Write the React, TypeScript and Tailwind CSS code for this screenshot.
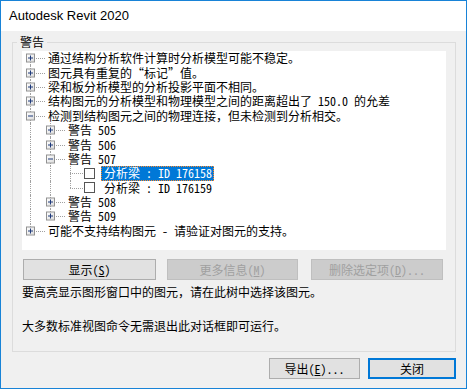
import React from "react";

const CJK = "font-['Noto_Sans_Mono_CJK_SC','Noto_Sans_CJK_SC',sans-serif]";

type Item = {
  label: React.ReactNode;
  expander?: "plus" | "minus";
  check?: boolean;
  selected?: boolean;
  children?: Item[];
};

const TREE: Item[] = [
  { label: "通过结构分析软件计算时分析模型可能不稳定。", expander: "plus" },
  { label: "图元具有重复的“标记”值。", expander: "plus" },
  { label: "梁和板分析模型的分析投影平面不相同。", expander: "plus" },
  { label: "结构图元的分析模型和物理模型之间的距离超出了 150.0 的允差", expander: "plus" },
  {
    label: "检测到结构图元之间的物理连接，但未检测到分析相交。",
    expander: "minus",
    children: [
      { label: "警告 505", expander: "plus" },
      { label: "警告 506", expander: "plus" },
      {
        label: "警告 507",
        expander: "minus",
        children: [
          { label: "分析梁 : ID 176158", check: true, selected: true },
          { label: "分析梁 : ID 176159", check: true },
        ],
      },
      { label: "警告 508", expander: "plus" },
      { label: "警告 509", expander: "plus" },
    ],
  },
  { label: "可能不支持结构图元 - 请验证对图元的支持。", expander: "plus" },
];

function Expander({ kind }: { kind: "plus" | "minus" }) {
  return (
    <span className="absolute left-[4px] top-1/2 -translate-y-1/2 w-[9px] h-[9px] border border-[#919191] bg-gradient-to-br from-white to-[#dcdcdc] flex items-center justify-center">
      <svg width="7" height="7" viewBox="0 0 7 7" aria-hidden>
        <path d="M1 3.5h5" stroke="#1f3a7a" strokeWidth="1" />
        {kind === "plus" && <path d="M3.5 1v5" stroke="#1f3a7a" strokeWidth="1" />}
      </svg>
    </span>
  );
}

function GuideCell({ pass }: { pass: boolean }) {
  return (
    <div className="relative w-[20px] h-full shrink-0">
      {pass && <span className="absolute left-[8px] top-0 h-full border-l border-dotted border-[#a0a0a0]" />}
    </div>
  );
}

function TreeRow({
  item,
  guides,
  top,
  bottom,
}: {
  item: Item;
  guides: boolean[];
  top: boolean;
  bottom: boolean;
}) {
  const leaf = item.check;
  return (
    <div className="flex h-[14.4px] items-stretch">
      {guides.map((g, i) => (
        <GuideCell key={i} pass={g} />
      ))}
      <div className="relative w-[20px] h-full shrink-0">
        {top && <span className="absolute left-[8px] top-0 h-1/2 border-l border-dotted border-[#a0a0a0]" />}
        {bottom && <span className="absolute left-[8px] top-1/2 h-1/2 border-l border-dotted border-[#a0a0a0]" />}
        <span
          className={
            "absolute left-[8px] top-1/2 border-t border-dotted border-[#a0a0a0] " +
            (leaf ? "w-[13px]" : "w-[15px]")
          }
        />
        {item.expander && <Expander kind={item.expander} />}
      </div>
      {leaf ? (
        <>
          <span className="ml-[2px] self-center w-[11px] h-[11px] border border-[#555] bg-white shrink-0" />
          <span
            className={
              "ml-[6px] pl-[3px] pr-[2px] flex items-center whitespace-nowrap " +
              (item.selected
                ? "bg-[#0078d7] text-white outline outline-1 outline-dotted outline-[#ff8828] -outline-offset-1"
                : "")
            }
          >
            {item.label}
          </span>
        </>
      ) : (
        <span className="ml-[3px] pl-[3px] flex items-center whitespace-nowrap">{item.label}</span>
      )}
    </div>
  );
}

function renderItems(items: Item[], guides: boolean[], root: boolean): React.ReactNode[] {
  const out: React.ReactNode[] = [];
  items.forEach((item, i) => {
    const isLast = i === items.length - 1;
    out.push(
      <TreeRow
        key={guides.length + "-" + i}
        item={item}
        guides={guides}
        top={!(root && i === 0)}
        bottom={!isLast}
      />
    );
    if (item.children) {
      out.push(...renderItems(item.children, [...guides, !isLast], false).map((n, j) => (
        <React.Fragment key={guides.length + "-" + i + "-" + j}>{n}</React.Fragment>
      )));
    }
  });
  return out;
}

function Button({
  children,
  disabled,
  primary,
  className = "",
}: {
  children: React.ReactNode;
  disabled?: boolean;
  primary?: boolean;
  className?: string;
}) {
  return (
    <div
      className={
        "h-[21px] flex items-center justify-center text-[12px] " +
        (disabled
          ? "bg-[#cccccc] border border-[#bfbfbf] text-[#a0a0a0] "
          : primary
          ? "bg-[#e1e1e1] border-2 border-[#0078d7] text-black "
          : "bg-[#e1e1e1] border border-[#adadad] text-black ") +
        className
      }
    >
      {children}
    </div>
  );
}

export default function App() {
  return (
    <div className={"w-[467px] h-[389px] border border-[#1883d7] bg-[#f0f0f0] flex flex-col text-black " + CJK}>
      {/* title bar */}
      <div className="h-[30px] bg-white flex items-center pl-[8px] text-[13px] font-['Liberation_Sans',sans-serif] shrink-0">
        Autodesk Revit 2020
      </div>

      <div className="flex-1 pl-[11px] pr-[10px] flex flex-col">
        <fieldset className="mt-[4px] h-[317px] border border-[#dcdcdc] px-[9px] pt-[2px] text-[12px] leading-[14px]">
          <legend className="ml-[-5px] px-[3px] leading-[14px]">警告</legend>

          <div className="h-[199px] bg-white overflow-hidden">
            {renderItems(TREE, [], true)}
          </div>

          <div className="mt-[9px] flex">
            <Button className="w-[133px] ml-[1px]">
              显示(<span className="underline underline-offset-1">S</span>)
            </Button>
            <Button disabled className="w-[131px] ml-[11px]">
              更多信息(<span className="underline underline-offset-1">M</span>)
            </Button>
            <Button disabled className="w-[132px] ml-[13px]">
              删除选定项(<span className="underline underline-offset-1">D</span>)...
            </Button>
          </div>

          <p className="mt-[5px] leading-[14px]">要高亮显示图形窗口中的图元，请在此树中选择该图元。</p>
          <p className="mt-[20px] leading-[14px]">大多数标准视图命令无需退出此对话框即可运行。</p>
        </fieldset>

        <div className="mt-[6px] flex justify-end gap-[8px] text-[12px]">
          <Button className="w-[91px]">
            导出(<span className="underline underline-offset-1">E</span>)...
          </Button>
          <Button primary className="w-[88px]">
            关闭
          </Button>
        </div>
      </div>
    </div>
  );
}
